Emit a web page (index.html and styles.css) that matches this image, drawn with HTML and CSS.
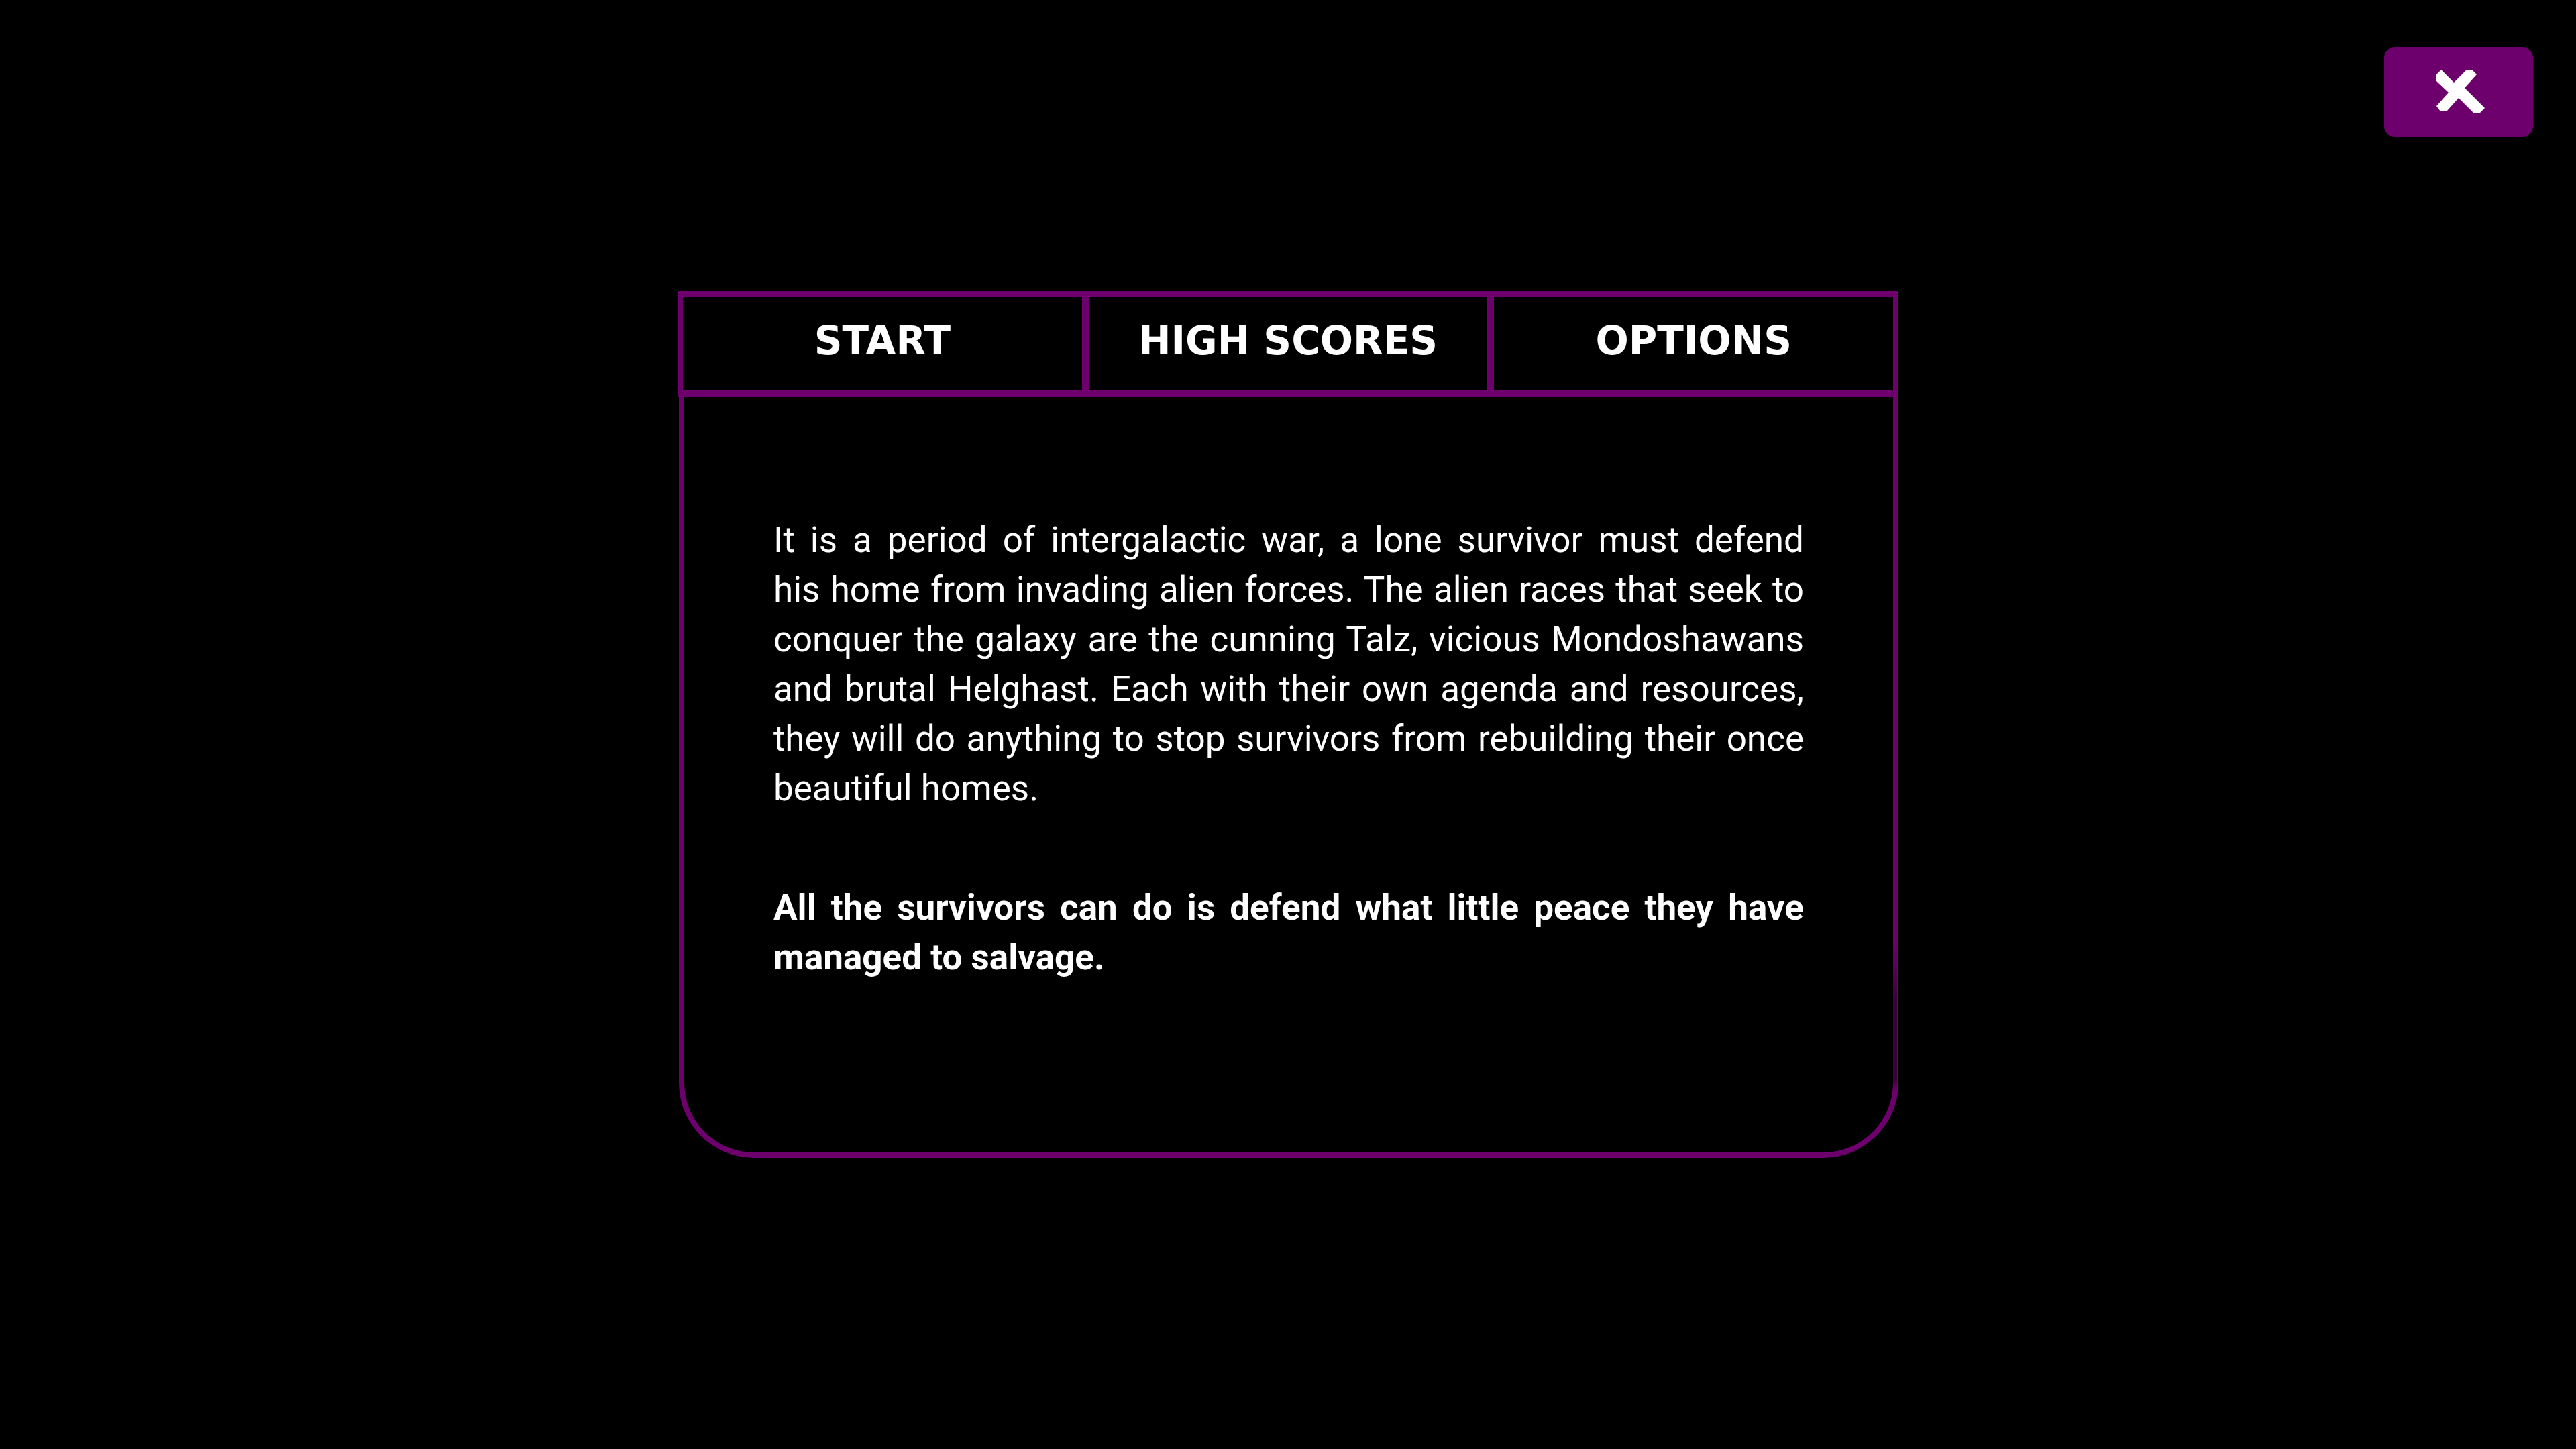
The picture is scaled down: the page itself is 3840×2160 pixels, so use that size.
FILE: index.html
```html
<!DOCTYPE html>
<html lang="en">
<head>
<meta charset="utf-8">
<meta name="viewport" content="width=device-width, initial-scale=1">
<title>Story</title>
<link rel="stylesheet" href="styles.css">
</head>
<body>
<main class="screen">
  <section class="panel">
    <nav class="tabs">
      <button class="tab" type="button">START</button>
      <button class="tab" type="button">HIGH SCORES</button>
      <button class="tab" type="button">OPTIONS</button>
    </nav>
    <article class="story">
      <p class="text">
        <span class="line">It is a period of intergalactic war, a lone survivor must defend</span>
        <span class="line">his home from invading alien forces. The alien races that seek to</span>
        <span class="line">conquer the galaxy are the cunning Talz, vicious Mondoshawans</span>
        <span class="line">and brutal Helghast. Each with their own agenda and resources,</span>
        <span class="line">they will do anything to stop survivors from rebuilding their once</span>
        <span class="line">beautiful homes.</span>
      </p>
      <p class="text text-strong">
        <span class="line">All the survivors can do is defend what little peace they have</span>
        <span class="line">managed to salvage.</span>
      </p>
    </article>
  </section>
  <button class="close" type="button" aria-label="Close">
    <svg width="78" height="66" viewBox="-6 0 78 66" aria-hidden="true">
      <path fill="#fff" d="M7 0 26 19 45 0H53L60 7 42 27 72 57 64 65H56L33 42 15 62H6L0 54 18 34 0 17V7Z"/>
    </svg>
  </button>
</main>
</body>
</html>
```
FILE: styles.css
```css
:root {
  --purple: #6d006d;
}

* {
  box-sizing: border-box;
}

body {
  margin: 0;
  background: #000;
  color: #fff;
  font-family: Roboto, "Liberation Sans", sans-serif;
}

button {
  margin: 0;
  padding: 0;
  border: 0;
  color: inherit;
  cursor: pointer;
}

.screen {
  display: grid;
  min-height: 100vh;
}

.panel,
.close {
  grid-area: 1 / 1;
}

.panel {
  place-self: center;
  width: 100%;
  max-width: 1820px;
}

.close {
  display: grid;
  place-items: center;
  place-self: start end;
  width: 222px;
  height: 134px;
  margin: 70px 64px;
  border-radius: 16px;
  background: var(--purple);
}

.tabs {
  display: grid;
  grid-template-columns: repeat(3, 1fr);
  gap: 10px;
  padding: 8px 8px 10px;
  background: var(--purple);
}

.tab {
  height: 140px;
  padding-bottom: 8px;
  background: #000;
  font: bold 58px "DejaVu Sans", sans-serif;
}

.story {
  position: relative;
  margin-left: 2px;
  padding: 176px 133px 254px;
  border: 8px solid var(--purple);
  border-top: 0;
  border-radius: 0 0 112px 112px;
}

/* dimmed stretch of the right edge above the corner */
.story::after {
  content: "";
  position: absolute;
  right: -6px;
  bottom: 92px;
  width: 6px;
  height: 220px;
  background: linear-gradient(transparent, rgb(0 0 0 / 45%) 40%, rgb(0 0 0 / 45%) 92%, transparent);
}

.text {
  margin: 0;
  font-size: 53px;
  font-weight: 400;
  line-height: 74px;
}

.text-strong {
  margin-top: 104px;
  font-weight: 700;
}

.line {
  display: block;
  text-align: justify;
  text-align-last: justify;
}

.line:last-child {
  text-align-last: left;
}
```
